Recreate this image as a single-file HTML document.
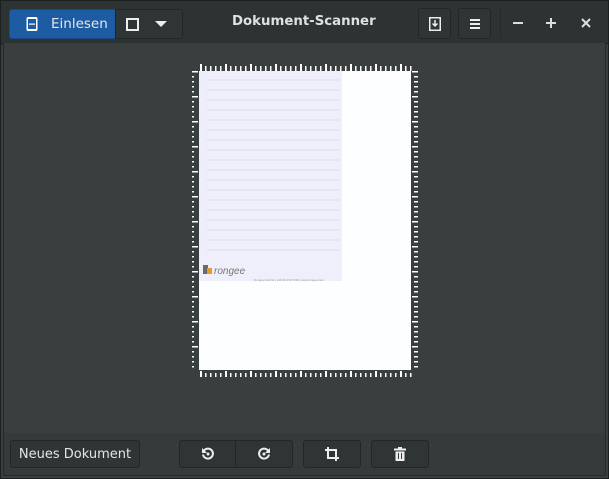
<!DOCTYPE html>
<html><head><meta charset="utf-8"><style>
*{margin:0;padding:0;box-sizing:border-box}
body{width:609px;height:479px;background:#1f2222;font-family:"DejaVu Sans","Liberation Sans",sans-serif;overflow:hidden;position:relative}
.win{position:absolute;left:0;top:0;width:609px;height:479px;background:#393f3f;border:1px solid #1c1f1f}
.hdr{position:absolute;left:0;top:0;width:607px;height:43px;background:#2d3232;border-bottom:1px solid #1c1f1f}
.btn{position:absolute;background:#2f3434;border:1px solid #232626;border-radius:3px;color:#e6e6e6;font-size:13px;display:flex;align-items:center;justify-content:center}
.main{position:absolute;left:2px;top:42px;width:603px;height:391px;border-left:1px solid #262a2a;border-right:1px solid #262a2a;border-bottom:1px solid #1c1f1f;background:#393f3f}
.ftr{position:absolute;left:2px;top:432px;width:603px;height:43px;background:#353a3a;border-left:1px solid #262a2a;border-right:1px solid #262a2a;border-bottom:1px solid #262a2a}
.title{position:absolute;left:231px;top:13px;color:#e0e0e0;font-weight:bold;font-size:13.3px}
</style></head><body>
<div class="win">
<div class="hdr">
 <div class="btn" style="left:8px;top:8px;width:107px;height:30px;background:#1d5ba3;border-color:#174a86;border-radius:3px 0 0 3px;justify-content:flex-start">
  <svg width="14" height="16" style="margin-left:15px" viewBox="0 0 14 16"><rect x="1.5" y="1" width="11" height="14" rx="1.5" fill="#fff"/><rect x="3" y="3" width="8" height="10" fill="#1d5ba3"/><rect x="4" y="7.5" width="6" height="1.2" fill="#fff"/></svg>
  <span style="margin-left:12px;font-size:13.5px">Einlesen</span></div>
 <div class="btn" style="left:114px;top:8px;width:68px;height:30px;border-radius:0 3px 3px 0;justify-content:flex-start">
  <div style="margin-left:10px;width:13px;height:13px;border:2px solid #eee"></div>
  <div style="margin-left:16px;width:0;height:0;border-left:6px solid transparent;border-right:6px solid transparent;border-top:6px solid #eee"></div></div>
 <div class="title">Dokument-Scanner</div>
 <div class="btn" style="left:417px;top:7px;width:33px;height:31px">
  <svg width="12" height="14" viewBox="0 0 12 14"><rect x="0.75" y="0.75" width="10.5" height="12.5" fill="none" stroke="#eee" stroke-width="1.5"/><path d="M6 3v6M3.5 6.5L6 9l2.5-2.5" stroke="#eee" stroke-width="1.5" fill="none"/></svg></div>
 <div class="btn" style="left:457px;top:7px;width:33px;height:31px">
  <svg width="12" height="12" viewBox="0 0 12 12"><path d="M1 2h10M1 6h10M1 10h10" stroke="#eee" stroke-width="2"/></svg></div>
 <div style="position:absolute;left:499px;top:7px;width:1px;height:30px;background:#262a2a"></div>
 <svg style="position:absolute;left:512px;top:20px" width="10" height="4"><rect y="1" width="10" height="2" fill="#ddd"/></svg>
 <svg style="position:absolute;left:545px;top:17px" width="10" height="10"><path d="M5 0v10M0 5h10" stroke="#ddd" stroke-width="2"/></svg>
 <svg style="position:absolute;left:580px;top:17px" width="10" height="10"><path d="M1 1l8 8M9 1l-8 8" stroke="#ddd" stroke-width="2"/></svg>
</div>
<div class="main">
<svg style="position:absolute;left:0;top:0" width="602" height="390">
 <defs>
  <pattern id="ht" x="196" y="0" width="25" height="10" patternUnits="userSpaceOnUse"><rect x="0" y="0" width="2" height="10" fill="#fff"/><rect x="5" y="3" width="1.5" height="7" fill="#fff"/><rect x="10" y="3" width="1.5" height="7" fill="#fff"/><rect x="15" y="3" width="1.5" height="7" fill="#fff"/><rect x="20" y="3" width="1.5" height="7" fill="#fff"/></pattern>
  <pattern id="hb" x="196" y="0" width="25" height="10" patternUnits="userSpaceOnUse"><rect x="0" y="0" width="2" height="10" fill="#fff"/><rect x="5" y="0" width="1.5" height="5" fill="#fff"/><rect x="10" y="0" width="1.5" height="5" fill="#fff"/><rect x="15" y="0" width="1.5" height="5" fill="#fff"/><rect x="20" y="0" width="1.5" height="5" fill="#fff"/></pattern>
  <pattern id="vl" x="0" y="28" width="10" height="25" patternUnits="userSpaceOnUse"><rect x="0" y="0" width="10" height="1.5" fill="#fff"/><rect x="4" y="5" width="6" height="1.5" fill="#fff"/><rect x="4" y="10" width="6" height="1.5" fill="#fff"/><rect x="4" y="15" width="6" height="1.5" fill="#fff"/><rect x="4" y="20" width="6" height="1.5" fill="#fff"/></pattern>
  <pattern id="vr" x="0" y="28" width="10" height="25" patternUnits="userSpaceOnUse"><rect x="0" y="0" width="10" height="1.5" fill="#fff"/><rect x="0" y="5" width="6" height="1.5" fill="#fff"/><rect x="0" y="10" width="6" height="1.5" fill="#fff"/><rect x="0" y="15" width="6" height="1.5" fill="#fff"/><rect x="0" y="20" width="6" height="1.5" fill="#fff"/></pattern>
 </defs>
 <rect x="196" y="21" width="212" height="7" fill="url(#ht)"/>
 <rect x="196" y="328" width="212" height="6" fill="url(#hb)"/>
 <rect x="188" y="28" width="6" height="300" fill="url(#vl)"/>
 <rect x="408" y="28" width="6" height="300" fill="url(#vr)"/>
 <rect x="195" y="28" width="212" height="299" fill="#fdfeff"/>
 <rect x="195" y="28" width="143" height="210" fill="#eeeffa"/>
 <g stroke="#d4d6e8" stroke-width="0.7">
  <path d="M203 37h132M203 47h132M203 57h132M203 67h132M203 77h132M203 87h132M203 97h132M203 107h132M203 117h132M203 127h132M203 137h132M203 147h132M203 157h132M203 167h132M203 177h132M203 187h132M203 197h132M203 207h132"/>
 </g>
 <rect x="199" y="222" width="5" height="9" fill="#6a6a6a"/><rect x="203" y="225" width="5" height="6" fill="#e59a2a"/>
 <text x="210" y="231" font-size="10" font-style="italic" fill="#777" font-family="Liberation Sans">rongee</text>
 <text x="250" y="238" font-size="3" fill="#999" font-family="Liberation Sans">Rongee GmbH | +49 (0) 0 97 836 | www.rongee.com</text>
</svg>
</div>
<div class="ftr">
 <div class="btn" style="left:6px;top:7px;width:130px;height:28px">Neues Dokument</div>
 <div class="btn" style="left:175px;top:7px;width:57px;height:28px;border-radius:3px 0 0 3px">
  <svg width="14" height="14" viewBox="0 0 14 14"><path d="M3 3.5A5 5 0 1 1 2 7.5" fill="none" stroke="#eee" stroke-width="2"/><path d="M1 1v5h5z" fill="#eee"/><circle cx="7" cy="7" r="1.5" fill="#eee"/></svg></div>
 <div class="btn" style="left:231px;top:7px;width:58px;height:28px;border-radius:0 3px 3px 0">
  <svg width="14" height="14" viewBox="0 0 14 14"><path d="M11 3.5A5 5 0 1 0 12 7.5" fill="none" stroke="#eee" stroke-width="2"/><path d="M13 1v5H8z" fill="#eee"/><circle cx="7" cy="7" r="1.5" fill="#eee"/></svg></div>
 <div class="btn" style="left:299px;top:7px;width:58px;height:28px">
  <svg width="14" height="14" viewBox="0 0 14 14"><path d="M3 0v11h11M0 3h11v11" fill="none" stroke="#eee" stroke-width="2"/></svg></div>
 <div class="btn" style="left:367px;top:7px;width:58px;height:28px">
  <svg width="12" height="14" viewBox="0 0 12 14"><rect x="0" y="1.5" width="12" height="2" fill="#eee"/><rect x="4" y="0" width="4" height="2" fill="#eee"/><path d="M1.5 4.5h9V14h-9z" fill="#eee"/><path d="M4.5 6v6M7.5 6v6" stroke="#353a3a" stroke-width="1"/></svg></div>
</div>
</div>
</body></html>
